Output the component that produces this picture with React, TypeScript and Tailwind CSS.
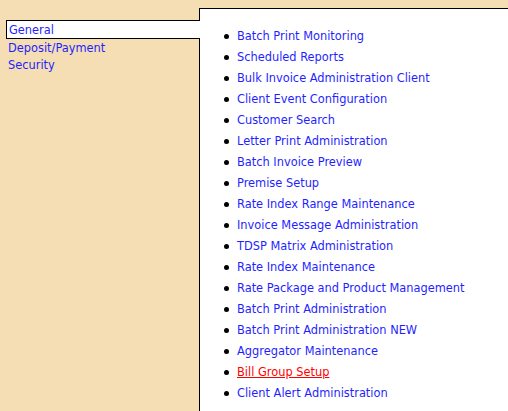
const links = [
  "Batch Print Monitoring",
  "Scheduled Reports",
  "Bulk Invoice Administration Client",
  "Client Event Configuration",
  "Customer Search",
  "Letter Print Administration",
  "Batch Invoice Preview",
  "Premise Setup",
  "Rate Index Range Maintenance",
  "Invoice Message Administration",
  "TDSP Matrix Administration",
  "Rate Index Maintenance",
  "Rate Package and Product Management",
  "Batch Print Administration",
  "Batch Print Administration NEW",
  "Aggregator Maintenance",
  "Bill Group Setup",
  "Client Alert Administration",
];

const tabs = ["General", "Deposit/Payment", "Security"];

export default function App() {
  return (
    <div
      className="flex h-[411px] w-[508px] overflow-hidden bg-[#f5deb3] text-[11.4px]"
      style={{ fontFamily: "Tahoma, 'DejaVu Sans', sans-serif" }}
    >
      <aside className="w-[199px] shrink-0 pt-[20px]">
        <nav className="flex flex-col">
          {tabs.map((tab, i) =>
            i === 0 ? (
              <a
                key={tab}
                href="#"
                className="relative z-10 ml-[6px] mr-[-1px] flex h-[19px] items-center border-y border-l border-black bg-white pl-[2px] pt-[2px] text-[#1f1fff]"
              >
                {tab}
              </a>
            ) : (
              <a key={tab} href="#" className="flex h-[17px] items-center pl-[8px] pt-[2px] text-[#1f1fff]">
                {tab}
              </a>
            )
          )}
        </nav>
      </aside>

      <section className="mt-[8px] flex-1 border-l border-t border-black bg-white pt-[17px]">
        <ul className="flex flex-col">
          {links.map((link) => {
            const active = link === "Bill Group Setup";
            return (
              <li key={link} className="flex h-[21px] items-center">
                <span className="ml-[24px] mr-[8px] h-[5px] w-[5px] rounded-full bg-black" />
                <a
                  href="#"
                  className={active ? "text-[#ff0000] underline" : "text-[#1f1fff]"}
                >
                  {link}
                </a>
              </li>
            );
          })}
        </ul>
      </section>
    </div>
  );
}
